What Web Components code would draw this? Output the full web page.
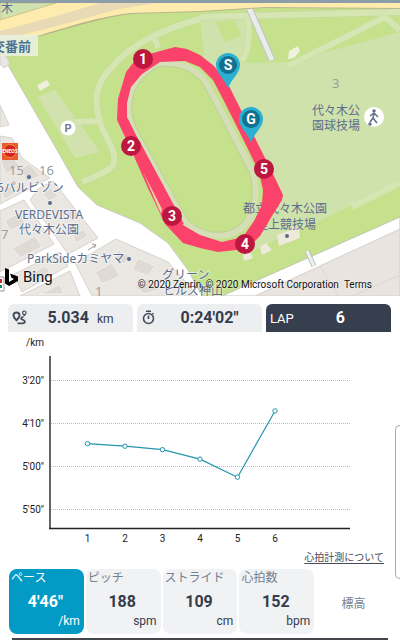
<!DOCTYPE html>
<html lang="ja">
<head>
<meta charset="utf-8">
<meta name="viewport" content="width=device-width, initial-scale=1">
<title>ラップ</title>
<style>
  body {
    margin: 0;
    background: #fff;
    color: #363c4c;
    font-family: Roboto, "Noto Sans CJK JP", sans-serif;
    --tile: #f1f2f4;
    --accent: #039bc6;
    --dark: #373e4d;
  }
</style>
</head>
<body>
<run-page>
  <run-map slot="map"></run-map>
  <stat-box slot="stats" value="5.034" unit="km">
    <svg slot="icon" width="16" height="16" viewBox="0 0 16 16" fill="none" stroke="#454b59" role="img" aria-label="距離">
      <path d="M4.5 2.4a3 3 0 0 0-3 3c0 2 3 4.800 3 4.800s3-2.800 3-4.800a3 3 0 0 0-3-3z" stroke-width="2"/>
      <path d="M12.300 1a1.700 1.700 0 0 0-1.700 1.700c0 1.200 1.700 2.800 1.700 2.800s1.700-1.600 1.700-2.800A1.700 1.700 0 0 0 12.300 1z" stroke-width="1.200"/>
      <path d="M11.500 6.800c-3 .4-3 2.200-1 2.900 3 .9 3.400 3.400 0 3.600H5.500" stroke-width="1.800"/>
    </svg>
  </stat-box>
  <stat-box slot="stats" value="0:24'02&quot;">
    <svg slot="icon" width="16" height="16" viewBox="0 0 16 16" fill="none" stroke="#454b59" stroke-width="1.600" role="img" aria-label="タイム">
      <circle cx="7.500" cy="8.500" r="5"/>
      <path d="M5 1.200h5M7.500 5.500v3.500M11.500 4.300l1-1"/>
    </svg>
  </stat-box>
  <stat-box slot="stats" value="6" dark><span slot="icon">LAP</span></stat-box>
  <pace-chart slot="chart" unit="/km" values="274,277,281,292,313,236"></pace-chart>
  <a slot="help" href="#heart-rate">心拍計測について</a>
  <metric-tile slot="metrics" label="ペース" value="4'46&quot;" unit="/km" selected></metric-tile>
  <metric-tile slot="metrics" label="ピッチ" value="188" unit="spm"></metric-tile>
  <metric-tile slot="metrics" label="ストライド" value="109" unit="cm"></metric-tile>
  <metric-tile slot="metrics" label="心拍数" value="152" unit="bpm"></metric-tile>
  <metric-tile slot="metrics" label="標高"></metric-tile>
</run-page>

<template id="page-template">
  <style>
    :host { display: block; position: relative; overflow: hidden; }
    .stats { display: grid; grid-template-columns: repeat(3, 1fr); gap: 4px; padding: 8px 9px 0 8px; }
    .help { display: flex; justify-content: flex-end; padding: 0 16px; height: 20px; }
    ::slotted(a) { color: #454b59; font-size: 10px; line-height: 18px; text-underline-offset: 2px; }
    .metrics { display: grid; grid-template-columns: repeat(5, 1fr); gap: 2px; padding: 0 9px; }
    hr { margin: 4px 12px 0; border: 0; height: 2px; background: #44464c; }
    .drawer {
      position: absolute; right: 0; top: 425px; width: 5px; height: 154px;
      box-sizing: border-box; border: 1px solid #aaa; border-right: 0;
      border-radius: 5px 0 0 5px; background: #fff;
    }
  </style>
  <slot name="map"></slot>
  <section class="stats"><slot name="stats"></slot></section>
  <slot name="chart"></slot>
  <div class="help"><slot name="help"></slot></div>
  <section class="metrics"><slot name="metrics"></slot></section>
  <hr>
  <div class="drawer"></div>
</template>

<template id="map-template">
  <style>
    :host { display: block; position: relative; background: #c5e18b; }
    svg { display: block; width: 100%; height: auto; }
    .place { font-family: "Noto Sans", "Noto Sans CJK JP", sans-serif; font-size: 12px; fill: #5b6d8c; }
    .block { font-family: "Noto Sans", sans-serif; font-size: 13px; fill: #99a09a; }
    .sign { font-size: 13px; font-weight: 700; fill: #4a7196; }
    .num { font-size: 14px; font-weight: 700; fill: #fff; text-anchor: middle; }
    .halo { stroke: #fff; stroke-width: 2px; stroke-opacity: .5; paint-order: stroke; }
    .bing {
      position: absolute; left: 4px; bottom: 9px; display: flex; align-items: center; gap: 4px;
      color: #111; font-size: 15px; line-height: 20px; text-shadow: 0 0 2px #fff;
    }
    .bing svg { width: 15px; height: 20px; }
    .credit {
      position: absolute; right: 28px; bottom: 3px; display: flex; gap: 5px;
      color: #111; font-size: 10px; line-height: 16px; white-space: nowrap; text-shadow: 0 0 2px #fff;
    }
    .credit a { color: inherit; text-decoration: none; }
  </style>
  <svg viewBox="0 0 400 296" role="img" aria-label="コース">
    <rect width="400" height="296" fill="#c5e18b"/>
    <!-- lighter park grounds -->
    <path d="M200 20 245 17 247 21 248 50 242 63 290 62 400 32V190L285 235 245 255 250 225 268 190 262 160 230 95 205 65z" fill="#d0e2ab"/>
    <path d="M283 19 382 15 290 62 283 58z" fill="#c5e18b"/>
    <path d="M216 22 234 20 242 36 225 42z" fill="#c5e18b"/>
    <path d="M350 206 400 180V216L222 296 200 288 180 260 245 258z" fill="#c5e18b"/>
    <path d="M38 97 55 90 100 152 75 158z" fill="#d1e2ae"/>
    <path d="M37 85 47 80 50 85 40 91z" fill="#eef0dc"/>
    <g fill="none" stroke="#c2d8a0" stroke-width="7">
      <path d="M200 19C160 30 130 45 112 67 90 88 96 110 102 128L111 146C121 168 110 170 82 182M155 39 158 48M98 121 75 122"/>
      <path d="M200 17 400 12M288 66 385 17 400 30M245 20 248 20C250 40 248 52 242 61"/>
    </g>
    <g fill="none" stroke="#d5e6b3" stroke-width="6">
      <path d="M200 19C160 30 130 45 112 67 90 88 96 110 102 128L111 146C121 168 110 170 82 182M155 39 158 48M98 121 75 122"/>
      <path d="M200 17 400 12M288 66 385 17 400 30M245 20 248 20C250 40 248 52 242 61"/>
    </g>
    <path d="M352 207 400 183" stroke="#d5e6b3" stroke-width="6"/>
    <path d="M158 64C173 62 192 64 206 82L252 170C259 190 255 219 240 229 225 240 203 238 185 222L136 135C122 110 126 80 158 64z" fill="none" stroke="#d4dfb8" stroke-width="6"/>
    <path d="M158 67C173 65 190 68 203 84L249 172C255 190 252 215 238 226 223 236 204 234 188 220L139 133C126 109 130 82 158 67z" fill="#c5e18b" stroke="#c0cfa0"/>
    <path d="M247 3 272 60" stroke="#bcc5c5" stroke-width="7"/>
    <path d="M247 3 272 60" stroke="#ebecea" stroke-width="5"/>
    <path d="M289 51 298 46 300 51 294 58 288 59z" fill="#eff1de"/>
    <path d="M277 235 288 231 292 226 299 228 300 238 279 246zM260 247 266 243 272 250 262 255zM243 255 250 252 253 258 244 261z" fill="#eeeadb"/>
    <!-- highway -->
    <path d="M0 3H400V9L265 8 200 12 130 14C90 20 60 32 33 38L0 48z" fill="#b9b68f"/>
    <path d="M0 3H400V8L265 7 200 11 130 13C90 18 60 30 33 37L0 47z" fill="#fdecae"/>
    <path d="M0 31 60 15 100 3H155L115 10 50 28 0 40z" fill="#e8dab4"/>
    <path d="M0 3H56L0 20z" fill="#d0e2b0" stroke="#d0c28b"/>
    <!-- town blocks and streets -->
    <path d="M0 48V62L9 67 57 150 78 187 97 205 140 223 168 243 188 270 202 296H0z" fill="#fff"/>
    <path d="M0 55 6 56 10 64 4 68 0 64zM0 105 9 125 0 127zM0 136 12 138 22 158 50 178 0 204zM38 189 53 181 98 238 68 254 30 200zM0 211 24 200 54 244 0 272zM14 274 60 252 68 266 22 292zM75 263 116 239 168 262 198 296H92zM20 296 70 271 80 296z" fill="#eae7e2" stroke="#d6d3cf"/>
    <path d="M0 160 12 156 20 166 6 174zM22 168 30 164 40 176 26 182zM2 190 12 186 16 193 4 199zM5 220 20 213 25 223 10 231zM12 248 35 236 42 247 20 258zM42 193 52 188 58 197 49 201zM66 212 76 210 80 217 72 222zM72 234 84 230 88 236 76 243zM26 276 46 266 50 273 32 283zM95 272 112 263 120 276 102 284zM118 250 130 256 124 264 114 259zM138 258 155 266 148 276 132 270zM135 286 148 278 158 290 144 294zM40 294 60 284 64 294z" fill="#dfdbd4" stroke="#f1efeb"/>
    <path d="M9 67 57 150 78 187 97 205 140 223 168 243 188 270 202 296" fill="none" stroke="#c9cbc5"/>
    <path d="M400 217 222 296H400z" fill="#fff" stroke="#bfc7b2"/>
    <path d="M400 229 255 296H400z" fill="#e9e4df" stroke="#d4d0cb"/>
    <path d="M320 266 338 296M352 296 400 275" stroke="#ddd7d2"/>
    <path d="M307 251 314 266" stroke="#b9bfc0" stroke-width="5"/>
    <path d="M307 251 314 266" stroke="#f0f1ef" stroke-width="3"/>
    <path d="M88 250 96 245M92 244 96 245 94 248" stroke="#999" fill="none"/>
    <rect width="400" height="3" fill="#8b9da9"/>

    <text class="place" x="1" y="13">木</text>
    <rect y="35" width="38" height="21" fill="#e9f0de" fill-opacity=".9"/>
    <text class="sign" x="-8" y="51">交番前</text>
    <text class="block" x="332" y="88">3</text>
    <text class="block" x="9" y="175">15</text>
    <text class="block" x="39" y="175">16</text>
    <text class="block" x="1" y="239">7</text>
    <text class="block" x="95" y="296">1</text>
    <g class="place">
      <g class="halo">
        <text x="-3" y="192">6パルビゾン</text>
        <text x="15" y="219">VERDEVISTA</text>
        <text x="19" y="234">代々木公園</text>
        <text x="27" y="263">ParkSideカミヤマ</text>
        <text x="162" y="279">グリーン</text>
        <text x="163" y="295">ヒルズ神山</text>
      </g>
      <text x="312" y="115">代々木公</text>
      <text x="312" y="130">園球技場</text>
      <text x="243" y="213">都立代々木公園</text>
      <text x="256" y="229">陸上競技場</text>
      <circle cx="29" cy="177" r="2"/>
      <circle cx="50" cy="203" r="2"/>
      <circle cx="129" cy="259" r="2"/>
      <circle cx="287" cy="236" r="2"/>
    </g>
    <circle cx="68" cy="128" r="7.500" fill="#fff"/>
    <text x="68" y="132" font-size="11" font-weight="700" fill="#6f7d9b" text-anchor="middle">P</text>
    <circle cx="374" cy="117" r="10" fill="#fff"/>
    <circle cx="374" cy="111" r="1.700" fill="#5d6b8b"/>
    <path d="M374 113 373 118 377 123M373 118 370 122M374 113 370 116M374 113 378 117" stroke="#5d6b8b" stroke-width="1.500" fill="none"/>
    <circle cx="370" cy="124" r="1.700" fill="#5d6b8b"/>
    <rect x="2" y="143" width="16" height="17" fill="#ea5a30"/>
    <circle cx="10" cy="151" r="6.500" fill="#d8231e" stroke="#f5943a"/>
    <text x="10" y="153" font-size="5" font-weight="700" fill="#fff" text-anchor="middle">ENEOS</text>
    <path d="M0 277H4V291H0" fill="#fff" stroke="#999"/>
    <path d="M0 279H2V283H0z" fill="#d23"/><path d="M0 285H2V288H0z" fill="#186"/>

    <!-- recorded course -->
    <path fill="#fb426a" fill-rule="evenodd" d="M153 53 175 47 187 49 200 55 214 66 228 84 250 128 265 158 274 176 283 195 282 200 272 216 260 236 250 246 236 250 218 252 200 248 183 243 165 224 150 192 135 158 117 120 118 99 126 72 137 58z
      M160 62 185 61 200 67 213 80 225 103 245 143 259 172 263 190 262 205 254 221 243 237 222 242 200 235 183 225 162 188 142 147 127 117 127 103 131 87 142 74z"/>
    <path fill="#fb426a" d="M140 142 184 224 168 226 148 188 134 156z"/>
    <path d="M143 172 162 209 161 214z" fill="#e6d3a8"/>
    <g class="markers"></g>
  </svg>
  <div class="bing">
    <svg viewBox="0 0 15 20" aria-hidden="true"><path d="M1 1 5 2.500V15L10 12 7.500 10.800 6 6.500 14 9.500V14L5 19 1 16.500z" fill="#000"/></svg>
    <span>Bing</span>
  </div>
  <div class="credit"><span>© 2020 Zenrin, © 2020 Microsoft Corporation</span><a href="#terms">Terms</a></div>
</template>

<template id="stat-template">
  <style>
    :host {
      display: flex; align-items: center; height: 28px; box-sizing: border-box; padding: 0 4px;
      background: #eceef0; border-radius: 6px 6px 0 0;
    }
    :host([dark]) { background: var(--dark); color: #fff; }
    .icon { display: flex; min-width: 20px; font-size: 13px; }
    .value { flex: 1; display: flex; justify-content: center; align-items: baseline; gap: 8px; }
    b { font-size: 16px; line-height: 28px; }
    .unit { font-size: 12px; }
    .unit:empty { display: none; }
  </style>
  <div class="icon"><slot name="icon"></slot></div>
  <div class="value"><b></b><span class="unit"></span></div>
</template>

<template id="metric-template">
  <style>
    :host { display: block; }
    button {
      display: grid; grid-template-rows: 20px 26px 16px; width: 100%; height: 65px;
      box-sizing: border-box; margin: 0; padding: 0 4px 3px 2px; border: 0; border-radius: 8px;
      background: var(--tile); color: inherit; font: inherit; text-align: left;
    }
    .label { color: #718192; font-size: 12px; line-height: 18px; }
    b { font-size: 16px; line-height: 26px; text-align: center; }
    .unit { font-size: 12px; line-height: 12px; text-align: right; }
    :host([selected]) button { background: var(--accent); color: #fff; }
    :host([selected]) .label { color: #fff; }
    :host(:not([value])) button { display: flex; align-items: center; justify-content: center; padding: 4px 0 0; background: none; }
  </style>
  <button type="button"><span class="label"></span></button>
</template>

<script>
(function () {
  "use strict";

  function attach(host, id) {
    var root = host.attachShadow({ mode: "open" });
    root.appendChild(document.getElementById(id).content.cloneNode(true));
    return root;
  }

  class RunPage extends HTMLElement {
    constructor() {
      super();
      attach(this, "page-template");
    }
  }

  var laps = [
    [143, 59], [131, 146], [172, 216], [245, 244], [264, 169],
  ];
  var pins = [
    { text: "S", x: 228, y: 65 },
    { text: "G", x: 251, y: 119 },
  ];

  class RunMap extends HTMLElement {
    constructor() {
      super();
      var html = "";
      laps.forEach(function (p, i) {
        html +=
          '<circle cx="' + p[0] + '" cy="' + p[1] + '" r="10" fill="#bd1740"/>' +
          '<text class="num" x="' + p[0] + '" y="' + (p[1] + 5) + '">' + (i + 1) + "</text>";
      });
      pins.forEach(function (p) {
        html +=
          '<g transform="translate(' + p.x + " " + p.y + ')">' +
          '<path d="M0 24C-2 15-12 9-12 0A12 12 0 0 1 12 0C12 9 2 15 0 24z" fill="#2cb0d2"/>' +
          '<circle r="9" fill="#12718f"/>' +
          '<text class="num" y="5">' + p.text + "</text></g>";
      });
      attach(this, "map-template").querySelector(".markers").innerHTML = html;
    }
  }

  class StatBox extends HTMLElement {
    connectedCallback() {
      if (this.shadowRoot) return;
      var root = attach(this, "stat-template");
      root.querySelector("b").textContent = this.getAttribute("value");
      root.querySelector(".unit").textContent = this.getAttribute("unit") || "";
    }
  }

  class MetricTile extends HTMLElement {
    connectedCallback() {
      if (this.shadowRoot) return;
      var button = attach(this, "metric-template").querySelector("button");
      button.querySelector(".label").textContent = this.getAttribute("label");
      if (!this.hasAttribute("value")) return;
      var value = document.createElement("b");
      value.textContent = this.getAttribute("value");
      var unit = document.createElement("span");
      unit.className = "unit";
      unit.textContent = this.getAttribute("unit");
      button.append(value, unit);
    }
  }

  // values are seconds per km, slower is lower
  var TOP = 200, STEP = 50;

  function yOf(sec) {
    return 48 + ((sec - TOP) / STEP) * 43;
  }

  function pace(sec) {
    return Math.floor(sec / 60) + "'" + String(sec % 60).padStart(2, "0") + '"';
  }

  class PaceChart extends HTMLElement {
    connectedCallback() {
      if (this.shadowRoot) return;
      var values = this.getAttribute("values").split(",").map(Number);
      var html = '<text x="44" y="14" text-anchor="end">' + this.getAttribute("unit") + "</text>";
      for (var i = 0; i < 4; i++) {
        var sec = TOP + i * STEP;
        html +=
          '<path class="grid" d="M51 ' + (yOf(sec) + 0.5) + 'H350"/>' +
          '<text x="44" y="' + (yOf(sec) + 4) + '" text-anchor="end">' + pace(sec) + "</text>";
      }
      html += '<path class="y" d="M50 24V197"/><path class="x" d="M49 196.5H350"/>';
      var points = values.map(function (v, n) {
        return [87.5 + n * 37.5, yOf(v)];
      });
      html += '<polyline points="' + points.join(" ") + '"/>';
      points.forEach(function (p, n) {
        html +=
          '<circle cx="' + p[0] + '" cy="' + p[1] + '" r="2.200"/>' +
          '<text x="' + p[0] + '" y="210" text-anchor="middle">' + (n + 1) + "</text>";
      });
      this.attachShadow({ mode: "open" }).innerHTML =
        "<style>:host{display:block}svg{display:block;width:100%;height:auto}" +
        "text{font-size:10px;fill:#222}.grid{stroke:#bbb;stroke-dasharray:1 1}" +
        ".y{stroke:#666;stroke-width:2}.x{stroke:#222;stroke-width:1.500}" +
        "polyline{fill:none;stroke:#2596ae;stroke-width:1.200}circle{fill:#fff;stroke:#2596ae}</style>" +
        '<svg viewBox="0 0 400 217" role="img" aria-label="ペース">' + html + "</svg>";
    }
  }

  customElements.define("run-page", RunPage);
  customElements.define("run-map", RunMap);
  customElements.define("stat-box", StatBox);
  customElements.define("metric-tile", MetricTile);
  customElements.define("pace-chart", PaceChart);
})();
</script>
</body>
</html>
